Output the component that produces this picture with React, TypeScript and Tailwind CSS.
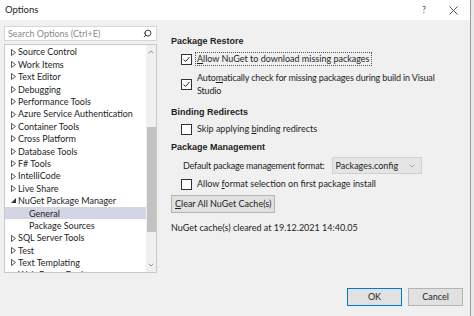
import { Search, ChevronUp, ChevronDown } from "lucide-react";

const treeItems: { label: string; kind: "closed" | "open" | "child"; selected?: boolean }[] = [
  { label: "Source Control", kind: "closed" },
  { label: "Work Items", kind: "closed" },
  { label: "Text Editor", kind: "closed" },
  { label: "Debugging", kind: "closed" },
  { label: "Performance Tools", kind: "closed" },
  { label: "Azure Service Authentication", kind: "closed" },
  { label: "Container Tools", kind: "closed" },
  { label: "Cross Platform", kind: "closed" },
  { label: "Database Tools", kind: "closed" },
  { label: "F# Tools", kind: "closed" },
  { label: "IntelliCode", kind: "closed" },
  { label: "Live Share", kind: "closed" },
  { label: "NuGet Package Manager", kind: "open" },
  { label: "General", kind: "child", selected: true },
  { label: "Package Sources", kind: "child" },
  { label: "SQL Server Tools", kind: "closed" },
  { label: "Test", kind: "closed" },
  { label: "Text Templating", kind: "closed" },
  { label: "Web Forms Designer", kind: "closed" },
];

const headerFont = { fontFamily: '"Liberation Sans", Arial, sans-serif' };

function Checkbox({ checked }: { checked?: boolean }) {
  return (
    <div className="w-[11px] h-[11px] border border-[#333] bg-white flex items-center justify-center shrink-0">
      {checked && (
        <svg width="9" height="9" viewBox="0 0 9 9">
          <path d="M1.5 4.5 L3.5 6.5 L7.5 2" stroke="#222" strokeWidth="1" fill="none" />
        </svg>
      )}
    </div>
  );
}

function TreeRow({ item }: { item: (typeof treeItems)[number] }) {
  return (
    <div className={`h-[12.4px] flex items-center ${item.selected ? "bg-[#d2d5e3]" : ""}`}>
      {item.kind === "child" ? (
        <span className="pl-[24px]">{item.label}</span>
      ) : (
        <>
          <span className="w-[13px] pl-[6px] flex items-center">
            {item.kind === "open" ? (
              <svg width="5" height="5" viewBox="0 0 5 5">
                <path d="M5 0 L5 5 L0 5 Z" fill="#333" />
              </svg>
            ) : (
              <svg width="5" height="7" viewBox="0 0 5 7">
                <path d="M0.5 0.5 L4.5 3.5 L0.5 6.5 Z" stroke="#444" strokeWidth="0.9" fill="none" />
              </svg>
            )}
          </span>
          <span>{item.label}</span>
        </>
      )}
    </div>
  );
}

export default function App() {
  return (
    <div
      className="w-[474px] h-[316px] bg-[#e9e9e9] flex overflow-hidden text-[9px] text-[#1e1e1e]"
      style={{ fontFamily: 'Lato, "Noto Sans", sans-serif' }}
    >
      <div className="w-[471px] h-full flex flex-col border-r border-[#9a9a9a]">
        {/* Title bar */}
        <div className="h-[20px] bg-white flex items-center justify-between shrink-0">
          <span className="pl-[5px] pt-[1px] text-[9.5px]">Options</span>
          <div className="flex items-center text-[#555]">
            <span className="text-[9px] mr-[23px]">?</span>
            <svg width="9" height="9" viewBox="0 0 9 9" className="mr-[12px]">
              <path d="M0.5 0.5 L8.5 8.5 M8.5 0.5 L0.5 8.5" stroke="#444" strokeWidth="0.9" />
            </svg>
          </div>
        </div>

        <div className="flex-1 bg-[#f0f0f0] flex">
          {/* Left side */}
          <div className="w-[160px] pl-[4px] pt-[6px] flex flex-col">
            <div className="h-[15px] w-[153px] bg-white border border-[#d6d6d6] flex items-center justify-between pl-[3px] pr-[4px]">
              <span className="text-[#8a8a8a]">Search Options (Ctrl+E)</span>
              <Search size={9} strokeWidth={2.5} className="text-[#333] -scale-x-100" />
            </div>
            <div className="mt-[3px] h-[229px] w-[153px] bg-white border border-[#c8c8c8] flex overflow-hidden">
              <div className="flex-1 pt-[1px] overflow-hidden whitespace-nowrap">
                {treeItems.map((item) => (
                  <TreeRow key={item.label} item={item} />
                ))}
              </div>
              <div className="w-[10px] bg-[#f0f0f0] flex flex-col items-center">
                <ChevronUp size={8} className="text-[#666] mt-[3px]" />
                <div className="w-[9px] h-[105px] bg-[#c2c2c2] mt-[71px]" />
                <div className="flex-1" />
                <ChevronDown size={8} className="text-[#666] mb-[3px]" />
              </div>
            </div>
          </div>

          {/* Right side */}
          <div className="flex-1 flex flex-col pl-[11px] pr-[7px]">
            <div className="font-bold text-[9px] mt-[16px] leading-[11px]" style={headerFont}>
              Package Restore
            </div>
            <div className="flex items-center gap-[3px] ml-[10px] mt-[5px]">
              <Checkbox checked />
              <span className="border border-dotted border-[#555] px-[1px] leading-[12px]">
                <u>A</u>llow NuGet to download missing packages
              </span>
            </div>
            <div className="flex items-center gap-[4px] ml-[10px] mt-[6px]">
              <Checkbox checked />
              <span className="leading-[12.5px] pl-[1px] tracking-[-0.15px]">
                Auto<u>m</u>atically check for missing packages during build in Visual
                <br />
                Studio
              </span>
            </div>
            <div className="font-bold text-[9px] mt-[10px] leading-[11px]" style={headerFont}>
              Binding Redirects
            </div>
            <div className="flex items-center gap-[4px] ml-[10px] mt-[5px]">
              <Checkbox />
              <span className="leading-[12px] pl-[1px]">
                Skip applying <u>b</u>inding redirects
              </span>
            </div>
            <div className="font-bold text-[9px] mt-[7px] leading-[11px]" style={headerFont}>
              Package Management
            </div>
            <div className="flex items-center ml-[12px] mt-[4px]">
              <span className="tracking-[-0.2px]">Default package management format:</span>
              <div className="ml-[7px] w-[90px] h-[17px] bg-[#e5e5e5] border border-[#d0d0d0] flex items-center justify-between pl-[3px] pr-[5px]">
                <span>Packages.config</span>
                <ChevronDown size={8} className="text-[#888]" />
              </div>
            </div>
            <div className="flex items-center gap-[4px] ml-[10px] mt-[4px]">
              <Checkbox />
              <span className="leading-[12px] pl-[1px]">
                Allow <u>f</u>ormat selection on first package install
              </span>
            </div>
            <div className="mt-[5px]">
              <button className="h-[18px] px-[3px] bg-[#e1e1e1] border border-[#b4b4b4] leading-[14px]">
                <u>C</u>lear All NuGet Cache(s)
              </button>
            </div>
            <div className="mt-[8px]">NuGet cache(s) cleared at 19.12.2021 14:40.05</div>
            <div className="flex-1" />
            <div className="flex justify-end gap-[6px] mb-[10px]">
              <button className="w-[55px] h-[18px] bg-[#e1e1e1] border border-[#0078d7]">OK</button>
              <button className="w-[55px] h-[18px] bg-[#e1e1e1] border border-[#b4b4b4]">Cancel</button>
            </div>
          </div>
        </div>
      </div>
    </div>
  );
}
